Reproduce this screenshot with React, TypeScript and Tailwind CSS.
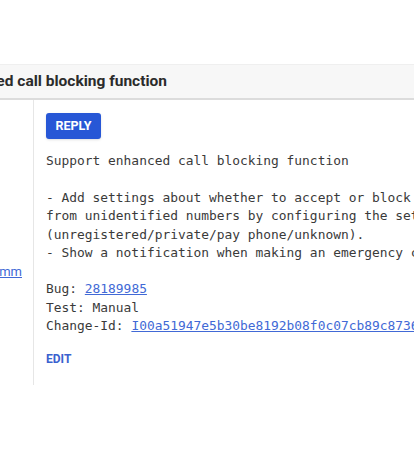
const mono = { fontFamily: '"DejaVu Sans Mono", "Liberation Mono", monospace' };

function CommitMessage() {
  return (
    <pre
      className="mt-[13px] whitespace-pre text-[12.9px] leading-[18.3px] text-[#3a3a3a] font-['DejaVu_Sans_Mono','Liberation_Mono',monospace]"
    >
      {"Support enhanced call blocking function\n\n"}
      {"- Add settings about whether to accept or block calls\n"}
      {"from unidentified numbers by configuring the settings\n"}
      {"(unregistered/private/pay phone/unknown).\n"}
      {"- Show a notification when making an emergency call.\n\n"}
      {"Bug: "}
      <a className="text-[#4169d6] underline">28189985</a>
      {"\nTest: Manual\nChange-Id: "}
      <a className="text-[#4169d6] underline">I00a51947e5b30be8192b08f0c07cb89c87365e2c</a>
    </pre>
  );
}

export default function App() {
  return (
    <div className="w-[414px] h-[449px] overflow-hidden bg-white font-['Roboto','Liberation_Sans',sans-serif]">
      <div className="h-[64px]" />
      <div className="h-[36px] flex items-center bg-[#f7f7f7] border-t border-[#efefef] border-b-2 border-b-[#dcdcdc] overflow-hidden">
        <h1 className="ml-[-114px] whitespace-nowrap text-[15.5px] font-bold text-[#2b2b2b]">
          Support enhanced call blocking function
        </h1>
      </div>
      <div className="flex">
        <div className="w-[34px] shrink-0 border-r border-[#e6e6e6] overflow-hidden flex flex-col">
          <div className="mt-[164px] flex justify-end pr-[11px]">
            <a className="whitespace-nowrap text-[13px] leading-[16px] text-[#4169d6] underline">mm</a>
          </div>
        </div>
        <div className="pl-[12px] pt-[13px] pb-[18px] min-w-0" style={mono}>
          <button className="w-[55px] h-[26px] rounded-[3px] bg-[#2757d6] text-white text-[12.5px] font-bold font-['Roboto','Liberation_Sans',sans-serif] shadow-sm">
            REPLY
          </button>
          <CommitMessage />
          <div className="mt-[16px] text-[12px] leading-[16px] font-bold text-[#3a62cf] font-['Roboto','Liberation_Sans',sans-serif]">
            EDIT
          </div>
        </div>
      </div>
    </div>
  );
}
